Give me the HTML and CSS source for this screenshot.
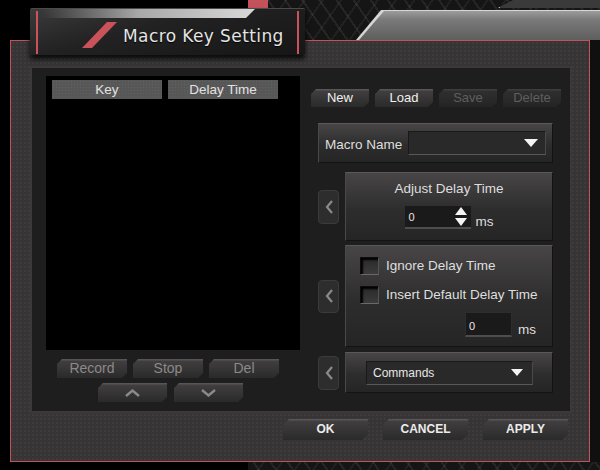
FILE: index.html
```html
<!DOCTYPE html>
<html lang="en">
<head>
    <meta charset="UTF-8">
    <meta name="viewport" content="width=device-width, initial-scale=1.0">
    <title>Macro Key Setting</title>
    <link rel="stylesheet" href="styles.css">
</head>
<body>

<div class="screen">
    <div class="topbar">
        <div class="void-top"></div>
        <div class="notch"></div>
        <div class="plate">
            <div class="plate-cap"></div>
            <div class="plate-bar"><div class="plate-fill"></div></div>
        </div>
    </div>

    <div class="tab">
        <svg class="tab-stripe" width="93" height="47" viewBox="0 0 93 47">
            <polygon points="77,13 87,13 62,39 52,39" fill="#c9525b"/>
        </svg>
        <span class="tab-title">Macro Key Setting</span>
    </div>

    <div class="middle">
        <div class="void-side"></div>
        <div class="dialog">
            <div class="workspace">
                <div class="list-col">
                    <div class="list">
                        <div class="list-head">
                            <span>Key</span>
                            <span>Delay Time</span>
                        </div>
                    </div>
                    <div class="edit-row">
                        <button class="btn">Record</button>
                        <button class="btn">Stop</button>
                        <button class="btn">Del</button>
                    </div>
                    <div class="move-row">
                        <button class="btn">
                            <svg width="17" height="8" viewBox="0 0 17 8"><polyline points="2,7 8.5,1.5 15,7" fill="none" stroke="#8a8a8a" stroke-width="2.4"/></svg>
                        </button>
                        <button class="btn">
                            <svg width="17" height="8" viewBox="0 0 17 8"><polyline points="2,1 8.5,6.5 15,1" fill="none" stroke="#8a8a8a" stroke-width="2.4"/></svg>
                        </button>
                    </div>
                </div>

                <div class="side">
                    <div class="file-row">
                        <button class="btn btn-file">New</button>
                        <button class="btn btn-file">Load</button>
                        <button class="btn btn-file btn-off">Save</button>
                        <button class="btn btn-file btn-off">Delete</button>
                    </div>

                    <div class="panel name-panel">
                        <span class="label name-label">Macro Name</span>
                        <div class="select name-select"><i class="tri"></i></div>
                    </div>

                    <div class="opt-row row-adjust">
                        <button class="nudge">
                            <svg width="10" height="16" viewBox="0 0 10 16"><polyline points="8,2 3,8 8,14" fill="none" stroke="#8a8a8a" stroke-width="2.2"/></svg>
                        </button>
                        <div class="panel opt-panel adjust-panel">
                            <span class="label">Adjust Delay Time</span>
                            <div class="spin-row">
                                <div class="spin">
                                    <span class="value">0</span>
                                    <div class="spin-arrows"><i class="up"></i><i class="down"></i></div>
                                </div>
                                <span class="label unit">ms</span>
                            </div>
                        </div>
                    </div>

                    <div class="opt-row row-ignore">
                        <button class="nudge nudge-short">
                            <svg width="10" height="16" viewBox="0 0 10 16"><polyline points="8,2 3,8 8,14" fill="none" stroke="#8a8a8a" stroke-width="2.2"/></svg>
                        </button>
                        <div class="panel opt-panel ignore-panel">
                            <label class="check-row"><span class="box"></span><span class="label">Ignore Delay Time</span></label>
                            <label class="check-row second"><span class="box"></span><span class="label">Insert Default Delay Time</span></label>
                            <div class="delay-row">
                                <div class="field"><span class="value">0</span></div>
                                <span class="label unit">ms</span>
                            </div>
                        </div>
                    </div>

                    <div class="opt-row row-commands">
                        <button class="nudge">
                            <svg width="10" height="16" viewBox="0 0 10 16"><polyline points="8,2 3,8 8,14" fill="none" stroke="#8a8a8a" stroke-width="2.2"/></svg>
                        </button>
                        <div class="panel opt-panel commands-panel">
                            <div class="select commands-select"><span>Commands</span><i class="tri tri-small"></i></div>
                        </div>
                    </div>
                </div>
            </div>

            <div class="actions">
                <button class="btn btn-action">OK</button>
                <button class="btn btn-action">CANCEL</button>
                <button class="btn btn-action">APPLY</button>
            </div>
        </div>
        <div class="edge"></div>
    </div>

    <div class="bottombar">
        <div class="void-bottom"></div>
        <div class="plate"></div>
    </div>
</div>

</body>
</html>
```

FILE: styles.css
```css
* {
    box-sizing: border-box;
}
body {
    margin: 0;
    background-color: #000;
    font-family: "Liberation Sans", Arial, sans-serif;
}
.screen {
    position: relative;
    width: 600px;
    height: 470px;
    overflow: hidden;
    display: flex;
    flex-direction: column;
}

/* backdrop: diamond plate and the grey bar behind the dialog */
.topbar {
    flex: none;
    height: 40px;
    display: flex;
}
.void-top {
    width: 248px;
}
.notch {
    width: 20px;
    height: 8px;
    background-color: #c4525a;
}
.plate {
    flex: 1;
    display: flex;
    flex-direction: column;
    background-color: #151515;
    background-image:
        repeating-linear-gradient(55deg, transparent 0 8px, rgba(255, 255, 255, 0.07) 8px 10px, transparent 10px 14px),
        repeating-linear-gradient(-55deg, transparent 0 9px, rgba(255, 255, 255, 0.05) 9px 11px, transparent 11px 15px);
}
.plate-cap {
    height: 8px;
    margin-left: 230px;
    background: linear-gradient(to right, #d8d8d8 0 2px, #3a3a3a 2px);
    clip-path: polygon(15px 0, 100% 0, 100% 100%, 0 100%);
}
.plate-bar {
    height: 30px;
    margin: 2px 0 0 88px;
    background-color: #d6d6d6;
    clip-path: polygon(25px 0, 100% 0, 100% 100%, 0 100%);
}
.plate-fill {
    height: 29px;
    margin: 1px 0 0 3px;
    background: linear-gradient(#9c9c9c, #7a7a7a 30%, #5e5e5e 100%);
    clip-path: polygon(25px 0, 100% 0, 100% 100%, 0 100%);
}
.bottombar {
    flex: none;
    height: 8px;
    display: flex;
}
.void-bottom {
    width: 248px;
}

/* title tab, sits over the dialog's top edge */
.tab {
    position: absolute;
    left: 30px;
    top: 8px;
    width: 275px;
    height: 47px;
    display: flex;
    border-radius: 2px;
    background:
        linear-gradient(#c9525b, #c9525b) 6px 2px / 2px 43px no-repeat,
        linear-gradient(#c9525b, #c9525b) 267px 2px / 2px 43px no-repeat,
        linear-gradient(165deg, #3c3b3b 0%, #232222 40%, #171616 100%);
    border-top: 1px solid #4a4a4a;
    box-shadow: 0 4px 5px rgba(0, 0, 0, 0.8);
}
.tab::before {
    content: "";
    position: absolute;
    left: 13px;
    top: 0;
    width: 212px;
    height: 9px;
    background: linear-gradient(to right, rgba(90, 90, 90, 0), #a8a8a8 45%, #d8d8d8 100%);
    clip-path: polygon(0 0, 100% 0, calc(100% - 9px) 100%, 0 100%);
}
.tab-stripe {
    flex: none;
}
.tab-title {
    padding-top: 18px;
    font-family: "DejaVu Sans", sans-serif;
    font-size: 17px;
    letter-spacing: 0.4px;
    line-height: 19px;
    color: #e4e4e4;
    text-shadow: 0 1px 1px #000;
}

/* dialog body */
.middle {
    flex: none;
    height: 422px;
    display: flex;
}
.void-side {
    width: 10px;
}
.dialog {
    width: 580px;
    height: 422px;
    padding: 27px 19px 0 21px;
    border: 1px solid #c4525a;
    background-color: #363434;
    background-image: radial-gradient(rgba(255, 255, 255, 0.035) 1px, transparent 1px);
    background-size: 4px 4px;
}
.edge {
    flex: 1;
    background-color: #101010;
}
.workspace {
    height: 343px;
    display: flex;
    padding: 8px 0 0 14px;
    background-color: #1f1e1e;
    box-shadow: 0 0 0 2px #3b3939;
}

/* key list on the left */
.list-col {
    width: 254px;
}
.list {
    height: 274px;
    padding: 4px 0 0 6px;
    background-color: #000;
}
.list-head {
    display: flex;
    gap: 6px;
}
.list-head span {
    width: 110px;
    height: 19px;
    line-height: 19px;
    text-align: center;
    font-size: 13.5px;
    color: #e2e2e2;
    background-color: #585757;
    background-image: radial-gradient(rgba(255, 255, 255, 0.06) 1px, transparent 1px);
    background-size: 3px 3px;
}
.edit-row {
    display: flex;
    gap: 6px;
    margin-top: 9px;
    padding-left: 11px;
}
.edit-row .btn {
    width: 70px;
}
.move-row {
    display: flex;
    gap: 7px;
    margin-top: 5px;
    padding-left: 52px;
}
.move-row .btn {
    width: 69px;
    display: flex;
    align-items: center;
    justify-content: center;
}

/* buttons */
.btn {
    height: 19px;
    padding: 0;
    border: none;
    font-family: "Liberation Sans", Arial, sans-serif;
    font-size: 14px;
    line-height: 19px;
    color: #8a8a8a;
    background: linear-gradient(#575555 0, #575555 1px, #403e3e 2px, #2b2a2a 100%);
    clip-path: polygon(5px 0, 100% 0, 100% calc(100% - 5px), calc(100% - 5px) 100%, 0 100%, 0 5px);
    cursor: pointer;
}
.btn-file {
    width: 58px;
    height: 18px;
    font-size: 13px;
    line-height: 18px;
    color: #f0f0f0;
}
.btn-off {
    color: #5e5e5e;
    background: linear-gradient(#3e3c3c 0, #3e3c3c 1px, #302f2f 2px, #252424 100%);
}
.btn-action {
    width: 85px;
    height: 21px;
    font-size: 12px;
    font-weight: bold;
    line-height: 21px;
    color: #ececec;
    clip-path: polygon(6px 0, 100% 0, 100% calc(100% - 6px), calc(100% - 6px) 100%, 0 100%, 0 6px);
}

/* right column */
.side {
    width: 250px;
    margin-left: 11px;
}
.file-row {
    display: flex;
    gap: 6px;
    margin-top: 13px;
}
.label {
    font-size: 13.5px;
    line-height: 16px;
    color: #dedede;
}
.panel {
    border: 1px solid #141313;
    border-top-color: #5a5858;
    border-left-color: #4a4848;
    background: linear-gradient(#474545, #2e2d2d 55%, #262525);
}
.name-panel {
    width: 235px;
    height: 40px;
    margin: 16px 0 0 7px;
    display: flex;
    align-items: center;
    gap: 6px;
    padding-left: 6px;
}
.name-label {
    margin-top: 3px;
}
.select {
    display: flex;
    align-items: center;
    justify-content: space-between;
    height: 24px;
    padding: 0 7px 0 6px;
    background-color: #2a2929;
    border: 1px solid #1a1919;
    border-bottom-color: #595757;
    border-right-color: #4a4848;
}
.name-select {
    width: 138px;
    justify-content: flex-end;
}
.tri {
    width: 0;
    height: 0;
    border-left: 7px solid transparent;
    border-right: 7px solid transparent;
    border-top: 8px solid #f4f4f4;
}
.tri-small {
    border-left-width: 6px;
    border-right-width: 6px;
    border-top-width: 7px;
}
.opt-row {
    display: flex;
    align-items: center;
    gap: 6px;
    margin-left: 7px;
}
.nudge {
    width: 21px;
    height: 34px;
    padding: 0;
    display: flex;
    align-items: center;
    justify-content: center;
    border: 1px solid #3c3b3b;
    border-radius: 4px;
    background-color: #2e2d2d;
    cursor: pointer;
}
.nudge-short {
    height: 33px;
}
.opt-panel {
    width: 208px;
}
.row-adjust {
    margin-top: 9px;
}
.adjust-panel {
    height: 69px;
    display: flex;
    flex-direction: column;
    align-items: center;
    padding-top: 8px;
}
.spin-row {
    display: flex;
    align-items: flex-end;
    gap: 5px;
    margin-top: 9px;
}
.spin {
    width: 66px;
    height: 23px;
    display: flex;
    align-items: center;
    justify-content: space-between;
    padding: 0 4px 0 4px;
    background-color: #1b1a1a;
    border-bottom: 2px solid #4e4d4d;
}
.value {
    font-size: 11px;
    color: #f2e4e4;
}
.spin-arrows {
    display: flex;
    flex-direction: column;
    gap: 3px;
}
.spin-arrows i {
    width: 0;
    height: 0;
    border-left: 6px solid transparent;
    border-right: 6px solid transparent;
}
.spin-arrows .up {
    border-bottom: 8px solid #f4f4f4;
}
.spin-arrows .down {
    border-top: 8px solid #f4f4f4;
}
.unit {
    line-height: 14px;
}
.row-ignore {
    margin-top: 4px;
}
.ignore-panel {
    height: 102px;
    padding: 11px 0 0 14px;
}
.check-row {
    display: flex;
    align-items: center;
    gap: 7px;
    height: 18px;
}
.check-row.second {
    margin-top: 11px;
}
.box {
    width: 19px;
    height: 18px;
    border: 1px solid #0e0e0e;
    border-bottom-color: #6a6868;
    border-right-color: #555353;
    background: linear-gradient(#2a2929, #3d3c3c);
    box-shadow: inset 2px 2px 2px #000;
}
.delay-row {
    display: flex;
    justify-content: flex-end;
    align-items: flex-end;
    gap: 6px;
    margin-top: 8px;
    padding-right: 16px;
}
.field {
    width: 47px;
    height: 25px;
    padding: 3px 0 0 3px;
    background-color: #1b1a1a;
    border: 1px solid #2e2d2d;
    border-bottom: 2px solid #4e4d4d;
}
.row-commands {
    margin-top: 5px;
}
.commands-panel {
    height: 41px;
    display: flex;
    align-items: center;
    padding-left: 20px;
}
.commands-select {
    width: 167px;
    font-size: 12px;
    color: #e6e6e6;
    padding-right: 9px;
}

/* OK / CANCEL / APPLY */
.actions {
    display: flex;
    justify-content: flex-end;
    gap: 15px;
    margin-top: 8px;
    padding-right: 2px;
}
```
